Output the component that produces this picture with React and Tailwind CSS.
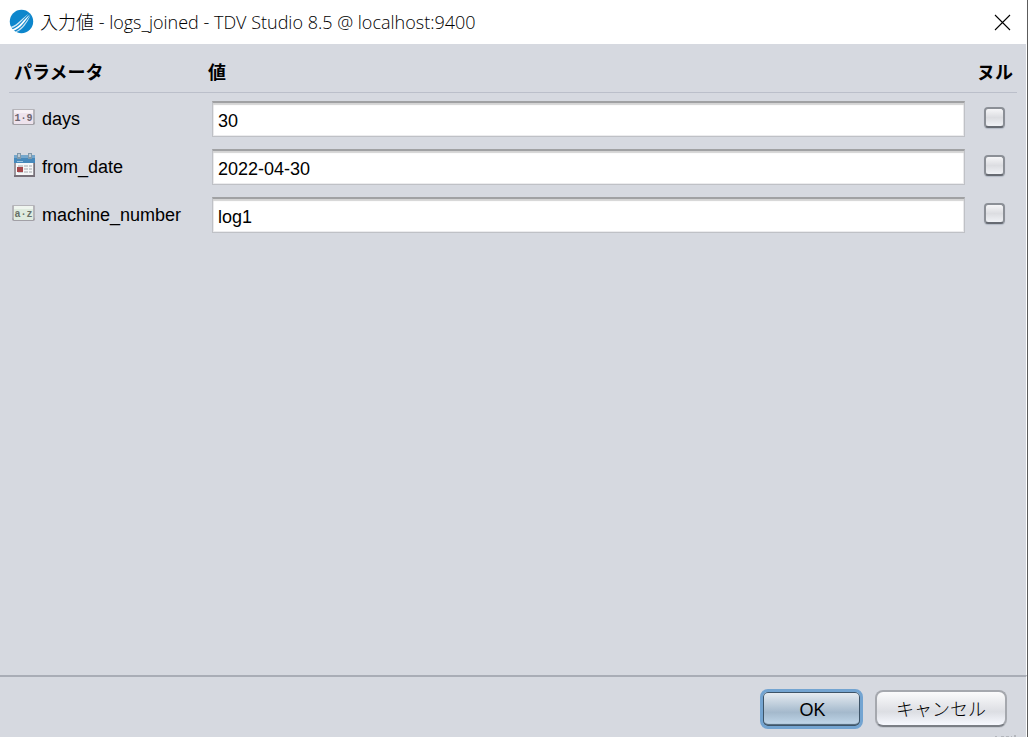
import React, { useState } from 'react';

const initialParams = [
  { name: 'days', type: 'number', value: '30', isNull: false },
  { name: 'from_date', type: 'date', value: '2022-04-30', isNull: false },
  { name: 'machine_number', type: 'text', value: 'log1', isNull: false },
];

const App = () => {
  const [params, setParams] = useState(initialParams);

  const updateParam = (name, changes) => {
    setParams(params.map(p => (p.name === name ? { ...p, ...changes } : p)));
  };

  return (
    <div className="min-h-screen flex flex-col bg-[#d6d9e0] border-r border-[#5c5c5c] text-black text-lg leading-6 font-['Liberation_Sans','Noto_Sans_CJK_JP',sans-serif]">
      <TitleBar title="入力値 - logs_joined - TDV Studio 8.5 @ localhost:9400" />

      <main className="flex-1 px-[9px] border-r border-white">
        <table className="w-full table-fixed border-collapse">
          <thead>
            <tr className="h-12 border-b border-[#bbbfca] text-left">
              <th className="w-[199px] p-0 pl-[5px] pt-[10px] font-bold">パラメータ</th>
              <th className="p-0 pt-[10px] font-bold">値</th>
              <th className="w-12 p-0 pl-2 pt-[10px] font-bold whitespace-nowrap">ヌル</th>
            </tr>
          </thead>
          <tbody>
            {params.map(param => (
              <ParamRow key={param.name} param={param} onChange={changes => updateParam(param.name, changes)} />
            ))}
          </tbody>
        </table>
      </main>

      <footer className="relative h-[62px] flex justify-end gap-3 pt-3 pr-[19px] border-t-2 border-t-[#a9adb6] border-r border-r-white">
        <button className="w-[103px] h-10 pl-[2px] pt-px rounded-lg border-3 border-[#73a4d1] bg-linear-to-b from-[#e9eef3] via-[#a4b9cc] via-60% to-[#c5dbee] shadow-[inset_0_0_0_1px_#3d5468,inset_0_-2px_1px_#4e6578]">OK</button>
        <button className="w-[132px] h-[37px] mt-px pt-[2px] rounded-lg border-2 border-[#a5a8ae] border-b-[#7b7f86] bg-linear-to-b from-[#fbfbfc] via-[#dcdee3] via-60% to-[#f7f9ff] shadow-[0_1px_0_#c3c7ce] font-light">キャンセル</button>
        <ResizeGrip />
      </footer>
    </div>
  );
};

// --- SUBCOMPONENTS ---

const TitleBar = ({ title }) => (
  <header className="h-11 flex items-center bg-white pl-2 pr-4">
    <AppLogo />
    <h1 className="flex-1 pl-[6px] font-['Open_Sans','Noto_Sans_CJK_JP',sans-serif] text-lg leading-6 font-light">{title}</h1>
    <button aria-label="閉じる">
      <svg width="17" height="17" viewBox="0 0 17 17" fill="none" stroke="#000" strokeWidth="1.1">
        <path d="M1 1l15 15M16 1L1 16" />
      </svg>
    </button>
  </header>
);

const ParamRow = ({ param, onChange }) => (
  <tr className="h-12">
    <td className="p-0 pl-[3px] pt-[6px]">
      <label htmlFor={param.name} className="flex items-center gap-[6px]">
        <span className="w-6 shrink-0">{typeIcons[param.type]}</span>
        {param.name}
      </label>
    </td>
    <td className="p-0 px-1 pt-[6px]">
      <input
        id={param.name}
        type="text"
        value={param.value}
        onChange={e => onChange({ value: e.target.value })}
        className="block w-full h-9 px-[5px] pt-1 bg-white border border-t-2 border-[#bfc1c6] border-t-[#a0a1a3] outline-none shadow-[inset_0_2px_1px_#d4d4d4,inset_0_0_0_1px_#ececee]"
      />
    </td>
    <td className="p-0 pl-[15px] pt-[2px]">
      <input
        type="checkbox"
        aria-label={`${param.name} ヌル`}
        checked={param.isNull}
        onChange={e => onChange({ isNull: e.target.checked })}
        className="block appearance-none size-[21px] rounded-sm border-2 border-[#8b8f96] border-b-[#666a72] bg-linear-to-b from-[#f6f6f8] via-[#dcdde1] to-[#f0f2f6] shadow-[0_1px_1px_#b4bbc6] checked:bg-[#6f93b5]"
      />
    </td>
  </tr>
);

const AppLogo = () => (
  <svg width="26" height="26" viewBox="0 0 26 26">
    <circle cx="13.5" cy="12.5" r="11.7" fill="#0d86cc" />
    <g fill="#fff">
      <path d="M3 17.8C10 15.500 14 9 21 4.500C15 10 11 17 3.500 19.200z" opacity=".8" />
      <path d="M4 20.500C12 17.500 15 11 22 5.500C17 12 13 19.500 5 22z" />
      <path d="M7.500 22.500C15 18.500 18 12 22.500 6.500C19 14 15 20.500 8.500 23z" opacity=".75" />
    </g>
  </svg>
);

// Small key-shaped badge used for the scalar types
const ScalarIcon = ({ text, tint, ink }) => (
  <svg width="23" height="16" viewBox="0 0 23 16" className="mb-1">
    <rect x="0" y="0" width="23" height="16" rx="2" fill="#a2a0a6" />
    <rect x="0" y="0" width="23" height="14" rx="2" fill="#b6b5ba" />
    <rect x="2" y="1" width="19" height="14" fill={tint} />
    <path d="M2 1h19v3H2z" fill="#fff" opacity=".5" />
    <text x="11.500" y="11.500" textAnchor="middle" fontSize="10" fontWeight="700" fontFamily="Liberation Mono" fill={ink}>{text}</text>
  </svg>
);

const CalendarIcon = () => (
  <svg width="23" height="25" viewBox="0 0 23 25" shapeRendering="crispEdges" className="mb-[6px]">
    <path d="M2 4h21v21H2z" fill="#777078" />
    <path d="M2 4h20v19H2z" fill="#98959b" />
    <path d="M4 10h17v13H4z" fill="#f6f7f8" />
    <path d="M2 3h21v8H2z" fill="#4789bb" />
    <path d="M2 3h21v3H2z" fill="#75a7cc" />
    <path d="M5 1h4v6H5zM16 1h4v6h-4z" fill="#8199aa" />
    <path d="M6 2h2v3H6zM17 2h2v3h-2z" fill="#bdcbd5" />
    <path d="M5 9h6v1H5z" fill="#9bc4df" />
    <path d="M6 14h14M6 17h14M6 20h14" stroke="#cdd0d3" strokeWidth="2" />
    <path d="M11 13v8M16 13v8" stroke="#f6f7f8" />
    <path d="M5 15h6v5H5z" fill="#a6474a" />
  </svg>
);

const ResizeGrip = () => (
  <svg width="24" height="2" viewBox="0 0 24 2" className="absolute right-2 bottom-0" fill="#b3b6bc">
    <path d="M1 1h2v1H1zM7 1h3v1H7zM12 1h3v1h-3zM17 1h1v1h-1zM20 0h2v2h-2z" />
  </svg>
);

const typeIcons = {
  number: <ScalarIcon text="1·9" tint="#eee3ed" ink="#6c6670" />,
  date: <CalendarIcon />,
  text: <ScalarIcon text="a·z" tint="#dfebdf" ink="#687068" />,
};

export default App;
